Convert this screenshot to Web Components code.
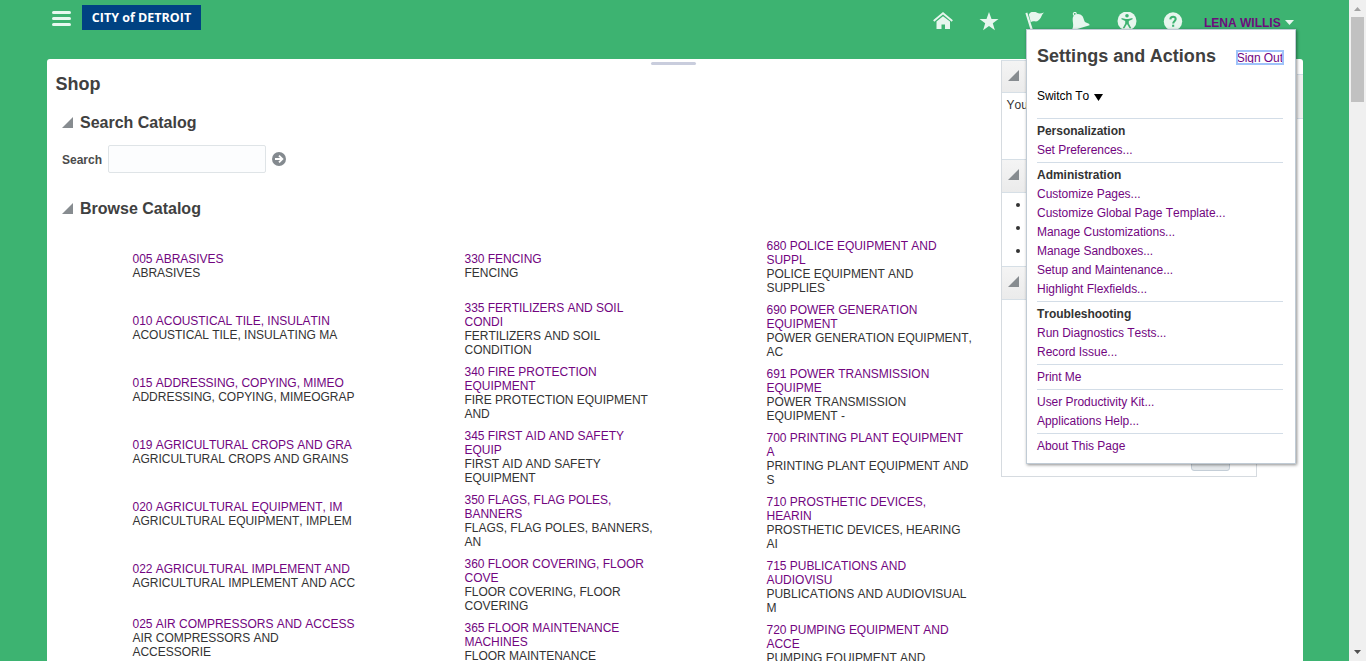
<!DOCTYPE html>
<html lang="en">
<head>
<meta charset="utf-8">
<title>Shop</title>
<style>
html,body{margin:0;height:661px;overflow:hidden}
body{font:12px/14px "Liberation Sans",Arial,sans-serif;color:#333;font-kerning:none}
</style>
</head>
<body>
<shop-app></shop-app>
<script>
function define(name, html, setup) {
  const t = document.createElement('template');
  t.innerHTML = html;
  customElements.define(name, class extends HTMLElement {
    connectedCallback() {
      if (this.shadowRoot) return;
      const r = this.attachShadow({mode: 'open'});
      r.append(t.content.cloneNode(true));
      if (setup) setup(r, this);
    }
  });
}

define('top-icon', `<style>:host{display:block;width:20px;height:20px;color:#e7f6ee}svg{display:block}</style><svg width="20" height="20" viewBox="0 0 20 20"></svg>`, (r, h) => {
  const shapes = {
    home: '<path d="M.7 9 10 1.2 19.3 9" fill="none" stroke="currentColor" stroke-width="1.8"/><path d="M10 4.200 3.500 9.600V17h5v-4.500h3.500V17h5V9.600z" fill="currentColor"/>',
    star: '<path d="m10 0 2.500 7H19.500l-5.700 4.300 2.100 7L10 14.100 4.100 18.300l2.100-7L.5 7h7z" fill="currentColor"/>',
    flag: '<path d="M.4 1.200 2.300.500 8 18H5.600zM3.800 2.200C7-1.500 9.700-.5 12 .8c2 1.100 4 .9 7-.3-1.900 1.500-2 3-3.100 4.900-1.500 2.600-3.700 4.600-6.400 3.900-1.500-.4-2.700-.1-3.700.9z" fill="currentColor"/>',
    bell: '<circle cx="3.800" cy="1.900" r="1.500" fill="none" stroke="currentColor" stroke-width="1.100"/><path d="M2 5C3.500 1.800 8.500.6 11.500 4.300c1.500 2 1.200 5.200 3.400 6.300 1.600.7 3.700.9 3.700 2.600L2.200 18.300 1.300 17C3.500 13.500.8 8.500 2 5z" fill="currentColor"/>',
    access: '<circle cx="10" cy="9" r="9.500" fill="currentColor"/><circle cx="10" cy="3.800" r="1.800" fill="#3db371"/><path d="m4.500 6 4.300 1h2.400l4.300-1v1.300l-3.700 1.600v2.600l2.500 4.700h-1.700L10 12l-2.600 4.200H5.700l2.500-4.700V8.900L4.500 7.300z" fill="#3db371"/>',
    help: '<circle cx="10" cy="9.500" r="9.200" fill="currentColor"/><path d="M7.300 7.400C7.500 3.800 13 4 12.700 7.200c-.2 2-2.500 2.100-2.500 4.300" fill="none" stroke="#3db371" stroke-width="2"/><path d="M9.100 12.700h2.100v2.100H9.100z" fill="#3db371"/>'
  };
  r.querySelector('svg').innerHTML = shapes[h.getAttribute('name')];
});

define('top-bar', `<style>
:host{display:flex;height:59px;align-items:flex-start;padding-left:52px}
.menu{display:grid;gap:3px;width:19px;margin:11px 11px 0 0}
.menu i{height:3px;border-radius:1.5px;background:#e7f8ef}
.logo{width:119px;height:25px;margin-top:5px;background:#004282;color:#fff;font:700 12.5px/26px "Open Sans",sans-serif;text-align:center;white-space:nowrap}
nav{display:flex;gap:26px;margin:12px 0 0 732px}
.user{margin:16px 0 0 21px;font-weight:700;color:#6c0d7c;display:flex;align-items:center;white-space:nowrap}
.user svg{margin:-1px 0 0 4px}
</style><div class="menu"><i></i><i></i><i></i></div><div class="logo">CITY of DETROIT</div>
<nav><top-icon name="home"></top-icon><top-icon name="star"></top-icon><top-icon name="flag"></top-icon><top-icon name="bell"></top-icon><top-icon name="access"></top-icon><top-icon name="help"></top-icon></nav>
<div class="user">LENA WILLIS<svg width="9" height="5"><path d="M0 0h9L4.500 5z" fill="#e7f6ee"/></svg></div>`);

define('disclosure-mark', `<style>:host{display:block;width:11px;height:11px}svg{display:block}</style><svg width="11" height="11"><path d="M11 0v11H0z" fill="#878c90"/></svg>`);

define('section-title', `<style>:host{display:flex;align-items:center;font:700 16px/20px "Liberation Sans",Arial,sans-serif;color:#404040}disclosure-mark{margin:0 7px 2px 0}</style><disclosure-mark></disclosure-mark><slot></slot>`);

define('catalog-item', `<style>:host{display:block;white-space:nowrap;color:#333;flex:none;letter-spacing:-.025px}a{color:#72057f}a,span{display:block}</style>`, (r, h) => {
  const [links, desc] = h.data;
  for (const [tag, list] of [['a', links], ['span', desc]])
    for (const line of list.split('|')) {
      const e = document.createElement(tag);
      e.textContent = line;
      r.append(e);
    }
});

const columns = [
  [['005 ABRASIVES','ABRASIVES'],['010 ACOUSTICAL TILE, INSULATIN','ACOUSTICAL TILE, INSULATING MA'],['015 ADDRESSING, COPYING, MIMEO','ADDRESSING, COPYING, MIMEOGRAP'],['019 AGRICULTURAL CROPS AND GRA','AGRICULTURAL CROPS AND GRAINS'],['020 AGRICULTURAL EQUIPMENT, IM','AGRICULTURAL EQUIPMENT, IMPLEM'],['022 AGRICULTURAL IMPLEMENT AND','AGRICULTURAL IMPLEMENT AND ACC'],['025 AIR COMPRESSORS AND ACCESS','AIR COMPRESSORS AND|ACCESSORIE']],
  [['330 FENCING','FENCING'],['335 FERTILIZERS AND SOIL|CONDI','FERTILIZERS AND SOIL|CONDITION'],['340 FIRE PROTECTION|EQUIPMENT','FIRE PROTECTION EQUIPMENT|AND'],['345 FIRST AID AND SAFETY|EQUIP','FIRST AID AND SAFETY|EQUIPMENT'],['350 FLAGS, FLAG POLES,|BANNERS','FLAGS, FLAG POLES, BANNERS,|AN'],['360 FLOOR COVERING, FLOOR|COVE','FLOOR COVERING, FLOOR|COVERING'],['365 FLOOR MAINTENANCE|MACHINES','FLOOR MAINTENANCE']],
  [['680 POLICE EQUIPMENT AND|SUPPL','POLICE EQUIPMENT AND|SUPPLIES'],['690 POWER GENERATION|EQUIPMENT','POWER GENERATION EQUIPMENT,|AC'],['691 POWER TRANSMISSION|EQUIPME','POWER TRANSMISSION|EQUIPMENT -'],['700 PRINTING PLANT EQUIPMENT|A','PRINTING PLANT EQUIPMENT AND|S'],['710 PROSTHETIC DEVICES,|HEARIN','PROSTHETIC DEVICES, HEARING|AI'],['715 PUBLICATIONS AND|AUDIOVISU','PUBLICATIONS AND AUDIOVISUAL|M'],['720 PUMPING EQUIPMENT AND|ACCE','PUMPING EQUIPMENT AND']]
];

define('catalog-grid', `<style>
:host{display:grid;grid-template-columns:332px 302px 220px;padding:20px 0 0 85.500px;height:450px;box-sizing:border-box}
.col{display:flex;flex-direction:column;gap:8px}
.col:nth-of-type(1){gap:34px;padding-top:13px}
.col:nth-of-type(1) :last-child{margin-top:-7px}
.col:nth-of-type(2){padding-top:13px}
.col:nth-of-type(2) :first-child{margin-bottom:13px}
</style>`, r => {
  for (const c of columns) {
    const d = document.createElement('div');
    d.className = 'col';
    for (const it of c) {
      const e = document.createElement('catalog-item');
      e.data = it;
      d.append(e);
    }
    r.append(d);
  }
});

define('side-panel', `<style>
:host{display:block;width:254px;height:415px;border:1px solid #d6dbe0;border-top-color:#d6dfe6;background:#fff}
header{height:32px;box-sizing:border-box;padding:9px 0 0 6px;background:linear-gradient(#f4f4f4,#ebebeb);border-bottom:1px solid #d6dfe6}
header.next{height:34px;padding-top:9px;border-top:1px solid #d6dfe6}
p{margin:0;height:66px;padding:5px 0 0 4.500px;box-sizing:border-box}
ul{list-style:none;margin:0;padding:10px 0 0 14px;height:73px;box-sizing:border-box;display:grid;align-content:start;gap:19px}
li{width:4px;height:4px;border-radius:50%;background:#333}
.foot{height:171px;display:flex;align-items:flex-end;padding-left:189px}
.btn{width:37px;height:26px;border:1px solid #c4ced7;border-radius:3px;background:#e4e8eb}
</style><header><disclosure-mark></disclosure-mark></header><p>You</p>
<header class="next"><disclosure-mark></disclosure-mark></header><ul><li></li><li></li><li></li></ul>
<header class="next"><disclosure-mark></disclosure-mark></header><div class="foot"><div class="btn"></div></div>`);

define('shop-page', `<style>
:host{display:flex;align-items:flex-start;margin-left:47px;width:1256px;height:602px;background:#fff;border-radius:3px 3px 0 0}
.main{width:954px;flex:none}
.grip{height:3px;width:45px;margin:3px 0 0 604px;border-radius:2px;background:#c9cddd}
h1{font:700 18px/22px "Liberation Sans",Arial,sans-serif;color:#404040;margin:8px 0 0 8.500px}
.search-title{margin:18px 0 0 15px}
.search{display:flex;align-items:center;margin:12px 0 0 15px;height:28px;font-weight:700;color:#4b4b4b}
.search span{padding-top:2px}
.search input{box-sizing:border-box;width:158px;height:28px;margin:0 6px 0 6px;padding:0;border:1px solid #dfe4e7;border-radius:2px;background:#fcfdfe}
.browse-title{margin:26px 0 0 15px}
.edge{width:6px;height:45px;margin:15px 0 0 40px;border-top:1px solid #d3dde7;border-bottom:1px solid #d3dde7;background:#efefef;box-sizing:border-box}
side-panel{margin-top:1px;flex:none}
</style><div class="main"><div class="grip"></div><h1>Shop</h1>
<section-title class="search-title">Search Catalog</section-title>
<div class="search"><span>Search</span><input aria-label="Search"><svg width="14" height="14"><circle cx="7" cy="7" r="7" fill="#848a8f"/><path d="M3 7h7M7 3.600 10.400 7 7 10.400" fill="none" stroke="#fff" stroke-width="1.800"/></svg></div>
<section-title class="browse-title">Browse Catalog</section-title><catalog-grid></catalog-grid></div>
<side-panel></side-panel><div class="edge"></div>`);

define('menu-section', `<style>:host{display:block;border-top:1px solid #d3dde7;padding:3px 0 2px;line-height:19px;letter-spacing:-.03px}
::slotted(b){display:block;color:#333}::slotted(a){display:block;color:#72057f}</style><slot></slot>`);

define('settings-menu', `<style>
:host{display:block;position:absolute;left:1026px;top:29px;width:270px;height:435px;box-sizing:border-box;padding:0 12px 0 10px;background:#fff;border:1px solid #c0cbd5;box-shadow:1px 1px 3px rgba(0,0,0,.45)}
.head{display:flex;justify-content:space-between;height:54px;padding-top:15px;box-sizing:border-box}
h2{font:700 18px/22px "Liberation Sans",Arial,sans-serif;color:#404040;margin:0;letter-spacing:.03px}
.out{height:13px;margin:6px 0 0;outline:2px solid #9fc3fa;outline-offset:-1px;color:#72057f;letter-spacing:-.05px}
.switch{display:flex;align-items:center;color:#000;height:24px;margin-bottom:10px;letter-spacing:-.05px}
.switch svg{margin:3px 0 0 5px}
</style><div class="head"><h2>Settings and Actions</h2><a class="out">Sign Out</a></div>
<div class="switch">Switch To<svg width="9" height="7"><path d="M0 0h9L4.500 7z"/></svg></div>
<menu-section><b>Personalization</b><a>Set Preferences...</a></menu-section>
<menu-section><b>Administration</b><a>Customize Pages...</a><a>Customize Global Page Template...</a><a>Manage Customizations...</a><a>Manage Sandboxes...</a><a>Setup and Maintenance...</a><a>Highlight Flexfields...</a></menu-section>
<menu-section><b>Troubleshooting</b><a>Run Diagnostics Tests...</a><a>Record Issue...</a></menu-section>
<menu-section><a>Print Me</a></menu-section>
<menu-section><a>User Productivity Kit...</a><a>Applications Help...</a></menu-section>
<menu-section><a>About This Page</a></menu-section>`);

define('scroll-rail', `<style>:host{display:flex;flex-direction:column;align-items:center;width:17px;height:661px;background:#f0f0f0}
.up{margin-top:7px}.thumb{width:13px;height:85px;margin-top:6px;background:#c1c1c1}.down{margin:auto 0 7px}svg{display:block}</style>
<svg class="up" width="7" height="4"><path d="M0 4h7L3.500 0z" fill="#a3a3a3"/></svg><div class="thumb"></div><svg class="down" width="7" height="4"><path d="M0 0h7L3.500 4z" fill="#505050"/></svg>`);

define('shop-app', `<style>:host{display:flex;width:1366px;height:661px;background:#3db371;overflow:hidden;position:relative}main{width:1349px;flex:none}</style>
<main><top-bar></top-bar><shop-page></shop-page></main><scroll-rail></scroll-rail><settings-menu></settings-menu>`);
</script>
</body>
</html>
